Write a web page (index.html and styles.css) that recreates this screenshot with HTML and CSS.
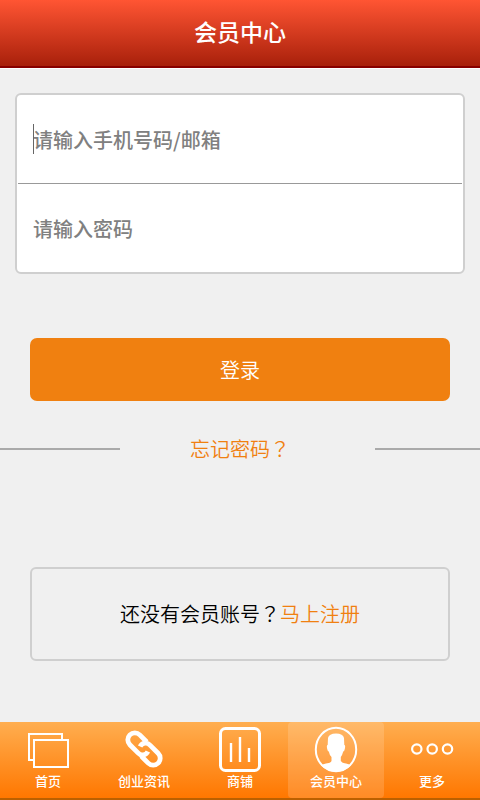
FILE: index.html
```html
<!DOCTYPE html>
<html lang="zh-CN">
<head>
<meta charset="utf-8">
<meta name="viewport" content="width=device-width, initial-scale=1">
<title>会员中心</title>
<link rel="stylesheet" href="styles.css">
</head>
<body>
<header class="header"><h1 class="title">会员中心</h1></header>
<main class="content">
  <form class="login">
    <div class="fields">
      <div class="field">
        <span class="caret"></span>
        <input class="input" type="text" aria-label="手机号码/邮箱" placeholder="请输入手机号码/邮箱">
      </div>
      <div class="field">
        <input class="input" type="password" aria-label="密码" placeholder="请输入密码">
      </div>
    </div>
    <button class="submit" type="submit">登录</button>
  </form>
  <div class="forgot">
    <a class="link" href="#forgot">忘记密码<span class="mark" lang="zh-TW">？</span></a>
  </div>
  <p class="register">还没有会员账号<span class="mark" lang="zh-TW">？</span><a class="link" href="#register">马上注册</a></p>
</main>
<nav class="tabs">
  <a class="tab" href="#home">
    <svg class="icon" viewBox="0 0 48 48" fill="none" stroke="#fff" stroke-width="2">
      <path d="M9 35H5V9H38V14" />
      <rect x="10" y="15" width="34" height="27"/>
    </svg>
    <span class="label">首页</span>
  </a>
  <a class="tab" href="#news">
    <svg class="icon" viewBox="0 0 48 48" fill="none" stroke="#fff" stroke-width="4.800">
      <g transform="translate(24 24) rotate(45)">
        <path d="M-3 -7H-13A7 7 0 0 0 -13 7H-1.500A6 6 0 0 0 4.500 -1"/>
        <path d="M3 7H13A7 7 0 0 0 13 -7H1.500A6 6 0 0 0 -4.500 1"/>
      </g>
    </svg>
    <span class="label">创业资讯</span>
  </a>
  <a class="tab" href="#shops">
    <svg class="icon" viewBox="0 0 48 48" fill="none" stroke="#fff">
      <rect x="4.500" y="3.500" width="39" height="42" rx="5" stroke-width="3"/>
      <path d="M15 18V37M24 12V37M33 23V37" stroke-width="2.400"/>
    </svg>
    <span class="label">商铺</span>
  </a>
  <a class="tab tab-active" href="#member" aria-current="page">
    <svg class="icon" viewBox="0 0 48 48">
      <ellipse cx="24" cy="24.500" rx="20.200" ry="21.700" fill="none" stroke="#fff" stroke-width="2"/>
      <path fill="#fff" d="M16 13Q17 8.500 24 8.500T32 13L32.300 20Q33.700 20 32.800 24Q32.200 26.500 31.200 26.500Q30 31 28.800 32V36Q30 38 34 38.500Q37 39 39 40.500Q33 46.500 24 46.500T9 40.500Q11 39 14 38.500Q18.500 38 19.500 36V32Q17.500 30 16.800 26.500Q15.800 26.500 15.200 24Q14.300 20 15.700 20Z"/>
    </svg>
    <span class="label">会员中心</span>
  </a>
  <a class="tab" href="#more">
    <svg class="icon" viewBox="0 0 48 48" fill="none" stroke="#fff" stroke-width="2.200">
      <circle cx="8.800" cy="24" r="4.700"/>
      <circle cx="24.200" cy="24" r="4.700"/>
      <circle cx="39.500" cy="24" r="4.700"/>
    </svg>
    <span class="label">更多</span>
  </a>
</nav>
</body>
</html>
```
FILE: styles.css
```css
* {
  box-sizing: border-box;
}

body {
  display: flex;
  flex-direction: column;
  min-height: 100vh;
  margin: 0;
  background: #f0f0f0;
  color: #000;
  font: 20px/28px "Noto Sans CJK SC", sans-serif;
  font-weight: 350;
}

.header {
  display: flex;
  align-items: center;
  justify-content: center;
  height: 68px;
  padding-bottom: 4px;
  border-bottom: 2px solid #880000;
  background: linear-gradient(#ff5533, #a8200b);
  box-shadow: 0 1px 0 #fff;
}

.title {
  margin: 0;
  color: #fff;
  font-size: 23px;
  font-weight: 500;
}

.content {
  flex: 1;
  padding-top: 25px;
}

.fields {
  margin: 0 15px;
  padding: 0 1px;
  border: 2px solid #cfcfcf;
  border-radius: 6px;
  background: #fff;
}

.field {
  position: relative;
  height: 88px;
}

.field:first-child {
  height: 89px;
  border-bottom: 1px solid #999;
}

.caret {
  position: absolute;
  top: 29px;
  left: 15px;
  width: 1px;
  height: 30px;
  background: #666;
}

.input {
  width: 100%;
  height: 100%;
  padding: 0 15px;
  border: 0;
  outline: 0;
  background: transparent;
  font: inherit;
  font-weight: 500;
}

.input::placeholder {
  color: #808080;
  opacity: 1;
}

.submit {
  display: block;
  width: calc(100% - 60px);
  height: 63px;
  margin: 64px 30px 0;
  border: 0;
  border-radius: 7px;
  background: #f08010;
  color: #fff;
  font: inherit;
}

.link {
  color: #f08010;
  text-decoration: none;
}

.mark {
  font-family: "Noto Sans CJK TC", sans-serif;
}

.forgot {
  display: grid;
  grid-template-columns: 1fr 2fr 1fr;
  align-items: center;
  margin-top: 34px;
  text-align: center;
}

.forgot::before,
.forgot::after {
  height: 2px;
  background: #aaa;
  content: "";
}

.forgot::after {
  margin-left: 15px;
}

.register {
  display: flex;
  align-items: center;
  justify-content: center;
  height: 94px;
  margin: 104px 30px 61px;
  border: 2px solid #cfcfcf;
  border-radius: 6px;
}

.tabs {
  display: grid;
  grid-template-columns: repeat(5, 1fr);
  height: 78px;
  border-bottom: 2px solid #bb6000;
  background: linear-gradient(#ffae50, #ff7700);
}

.tab {
  display: flex;
  flex-direction: column;
  align-items: center;
  padding-top: 3px;
  color: #fff;
  text-decoration: none;
}

.tab-active {
  border-radius: 4px;
  background: rgba(255, 255, 255, 0.15);
}

.icon {
  width: 48px;
  height: 48px;
}

.label {
  font-size: 13px;
  font-weight: 500;
  line-height: 16px;
}
```
